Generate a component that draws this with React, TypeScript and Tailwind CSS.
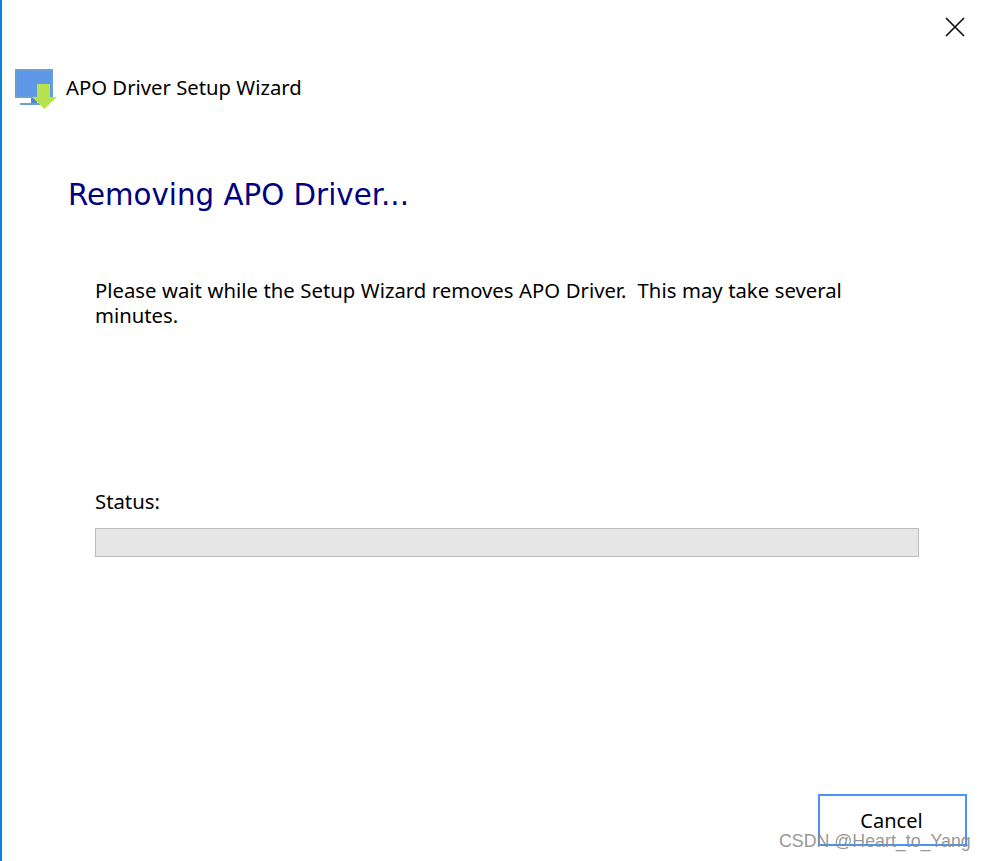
function SetupIcon() {
  return (
    <svg width="42" height="42" viewBox="0 0 42 42" className="shrink-0">
      <rect x="0" y="0" width="38" height="29" fill="#5f97e8" />
      <rect x="1" y="1" width="36" height="27" fill="none" stroke="#6c9fd8" strokeWidth="2" />
      <rect x="16" y="29" width="6" height="5" fill="#4f86cf" />
      <rect x="5" y="34" width="22" height="2" fill="#6c9fd8" />
      <path d="M22 15H35V28H42L29.500 40L17 28H22Z" fill="#b9e34e" />
    </svg>
  );
}

function App() {
  return (
    <div className="relative h-[861px] w-[986px] overflow-hidden bg-white border-l-2 border-[#0a84d8] text-black font-['Noto_Sans','Open_Sans',sans-serif]">
      <div className="flex justify-end pt-[16px] pr-[20px]">
        <svg width="22" height="22" viewBox="0 0 22 22">
          <path d="M2 2L20 20M20 2L2 20" stroke="#111" strokeWidth="1.7" fill="none" />
        </svg>
      </div>

      <div className="flex items-start gap-[9px] pl-[13px] mt-[31px]">
        <SetupIcon />
        <span className="mt-[4px] text-[20.3px] leading-[28px]">APO Driver Setup Wizard</span>
      </div>

      <h1 className="pl-[66px] mt-[65px] text-[29.3px] leading-[38px] text-[#00007f] font-['DejaVu_Sans',sans-serif]">
        Removing APO Driver...
      </h1>

      <div className="pl-[93px] pr-[110px] mt-[64px]">
        <p className="text-[20.3px] leading-[25px] whitespace-pre-wrap [word-spacing:0.3px]">
          Please wait while the Setup Wizard removes APO Driver.  This may take several minutes.
        </p>
        <p className="mt-[161px] text-[20.3px] leading-[25px]">Status:</p>
      </div>
      <div className="ml-[93px] mt-[14px] h-[29px] w-[824px] border border-[#bcbcbc] bg-[#e6e6e6]"></div>

      <div className="flex justify-end pr-[19px] mt-[237px]">
        <button className="h-[52px] w-[149px] border-2 border-[#4a94f5] pt-[1px] pr-[2px] text-[20px] leading-[25px]">
          Cancel
        </button>
      </div>

      <span className="absolute left-[777px] top-[830px] text-[17.8px] leading-[22px] text-[#8a8a8a]/90 font-['Liberation_Sans',sans-serif]">
        CSDN @Heart_to_Yang
      </span>
    </div>
  );
}

export default App;
